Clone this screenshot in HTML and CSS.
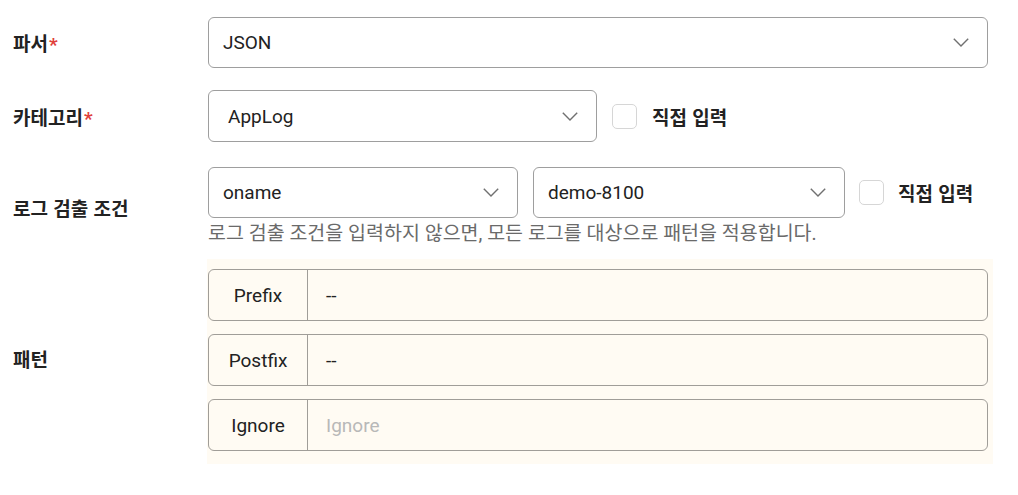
FILE: index.html
```html
<!DOCTYPE html>
<html lang="ko">
<head>
<meta charset="utf-8">
<link rel="stylesheet" href="styles.css">
</head>
<body>
<div class="form">
  <div class="row row-parser">
    <div class="label">파서<span class="req">*</span></div>
    <div class="field">
      <div class="select select-full">
        <span class="value">JSON</span>
        <svg class="chev" viewBox="0 0 16 9" width="16" height="9"><polyline points="0.8,0.8 8,8 15.2,0.8"/></svg>
      </div>
    </div>
  </div>

  <div class="row row-category">
    <div class="label">카테고리<span class="req">*</span></div>
    <div class="field inline">
      <div class="select select-cat">
        <span class="value">AppLog</span>
        <svg class="chev" viewBox="0 0 16 9" width="16" height="9"><polyline points="0.8,0.8 8,8 15.2,0.8"/></svg>
      </div>
      <label class="check"><span class="box"></span><span class="check-text">직접 입력</span></label>
    </div>
  </div>

  <div class="row row-cond">
    <div class="label">로그 검출 조건</div>
    <div class="field">
      <div class="inline">
        <div class="select select-oname">
          <span class="value">oname</span>
          <svg class="chev" viewBox="0 0 16 9" width="16" height="9"><polyline points="0.8,0.8 8,8 15.2,0.8"/></svg>
        </div>
        <div class="select select-demo">
          <span class="value">demo-8100</span>
          <svg class="chev" viewBox="0 0 16 9" width="16" height="9"><polyline points="0.8,0.8 8,8 15.2,0.8"/></svg>
        </div>
        <label class="check check-sm"><span class="box"></span><span class="check-text">직접 입력</span></label>
      </div>
      <div class="help">로그 검출 조건을 입력하지 않으면, 모든 로그를 대상으로 패턴을 적용합니다.</div>
    </div>
  </div>

  <div class="row row-pattern">
    <div class="label">패턴</div>
    <div class="pattern">
      <div class="group">
        <div class="addon">Prefix</div>
        <div class="input">--</div>
      </div>
      <div class="group">
        <div class="addon">Postfix</div>
        <div class="input">--</div>
      </div>
      <div class="group">
        <div class="addon">Ignore</div>
        <div class="input placeholder">Ignore</div>
      </div>
    </div>
  </div>
</div>
</body>
</html>
```

FILE: styles.css
```css
* { box-sizing: border-box; }

html, body {
  margin: 0;
  padding: 0;
  background: #ffffff;
}

body {
  font-family: Roboto, "Noto Sans CJK KR", sans-serif;
  font-size: 19px;
  color: #222222;
}

.form {
  padding-top: 17px;
}

.row {
  display: flex;
  align-items: center;
}

.label {
  width: 208px;
  flex: none;
  padding-left: 13px;
  font-family: "Noto Sans CJK KR", sans-serif;
  font-weight: 700;
  font-size: 19px;
  color: #222222;
}

.req {
  color: #e0403a;
  font-family: Roboto, sans-serif;
  margin-left: 1px;
}

.field {
  display: flex;
  flex-direction: column;
}

.inline {
  display: flex;
  flex-direction: row;
  align-items: center;
}

.select {
  display: flex;
  align-items: center;
  justify-content: space-between;
  height: 51px;
  border: 1.5px solid #9e9e9e;
  border-radius: 6px;
  padding: 0 18px 0 14px;
  background: #fff;
}

.value {
  font-size: 19px;
  color: #222;
}

.chev {
  display: block;
  flex: none;
}

.chev polyline {
  fill: none;
  stroke: #707070;
  stroke-width: 1.4;
}

.select-full { width: 780px; }

.row-category { margin-top: 22px; }
.select-cat { width: 389px; height: 52px; padding-left: 19px; }

.row-cond { margin-top: 25px; }
.select-oname { width: 310px; }
.select-demo { width: 312px; margin-left: 15px; }

.check {
  display: flex;
  align-items: center;
  margin-left: 15px;
}

.check-sm { margin-left: 14px; }

.box {
  width: 25px;
  height: 25px;
  border: 1.5px solid #d6d6d6;
  border-radius: 5px;
  background: #fff;
}

.check-text {
  margin-left: 15px;
  font-family: "Noto Sans CJK KR", sans-serif;
  font-weight: 700;
  font-size: 19px;
  color: #222;
}

.check-sm .check-text { margin-left: 14px; }

.help {
  margin-top: 2px;
  line-height: 27px;
  font-size: 19.5px;
  color: #6a6a6a;
  font-family: Roboto, "Noto Sans CJK KR", sans-serif;
}

.row-pattern { margin-top: 12px; }
.row-pattern .label { padding-bottom: 6px; }

.pattern {
  width: 786px;
  margin-left: -1px;
  padding: 10px 5px 13px 1px;
  background: #fffbf3;
  display: flex;
  flex-direction: column;
  gap: 13px;
}

.group {
  display: flex;
  height: 52px;
  border: 1.5px solid #a09d98;
  border-radius: 6px;
  overflow: hidden;
}

.addon {
  width: 99px;
  flex: none;
  display: flex;
  align-items: center;
  justify-content: center;
  border-right: 1.5px solid #a09d98;
  font-size: 19px;
  color: #222;
}

.input {
  flex: 1;
  display: flex;
  align-items: center;
  padding-left: 18px;
  font-size: 19px;
  color: #222;
}

.placeholder {
  color: #b8b8b8;
}
```
